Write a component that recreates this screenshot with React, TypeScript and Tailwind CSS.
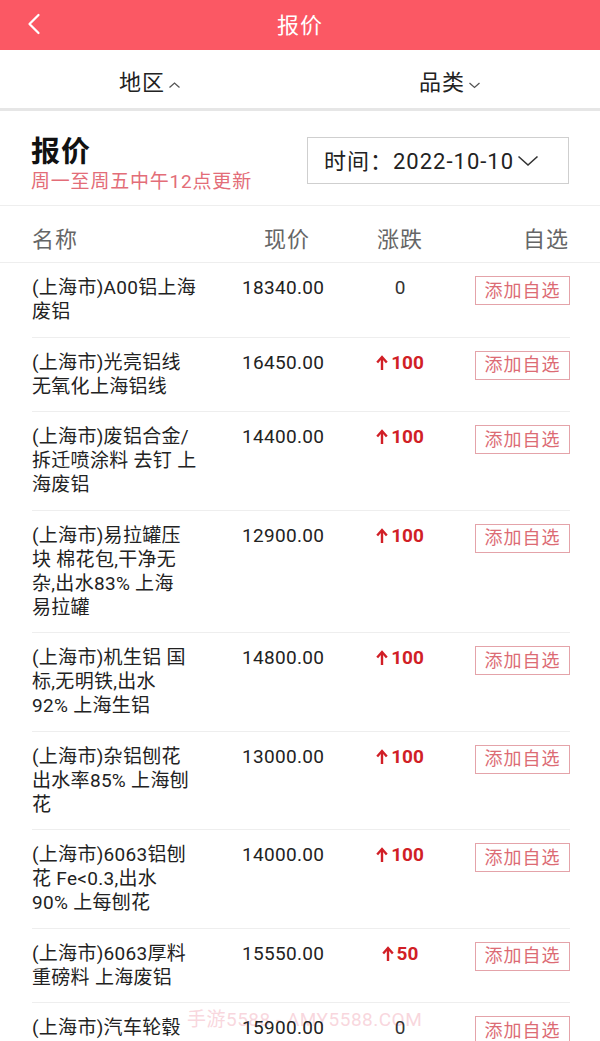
import { ChevronLeft } from 'lucide-react'

// names are kept in the same line breaks as the app shows them
const rows = [
  { name: ['(上海市)A00铝上海', '废铝'], price: '18340.00', change: 0 },
  { name: ['(上海市)光亮铝线', '无氧化上海铝线'], price: '16450.00', change: 100 },
  { name: ['(上海市)废铝合金/', '拆迁喷涂料 去钉 上', '海废铝'], price: '14400.00', change: 100 },
  { name: ['(上海市)易拉罐压', '块 棉花包,干净无', '杂,出水83% 上海', '易拉罐'], price: '12900.00', change: 100 },
  { name: ['(上海市)机生铝 国', '标,无明铁,出水', '92% 上海生铝'], price: '14800.00', change: 100 },
  { name: ['(上海市)杂铝刨花', '出水率85% 上海刨', '花'], price: '13000.00', change: 100 },
  { name: ['(上海市)6063铝刨', '花 Fe<0.3,出水', '90% 上每刨花'], price: '14000.00', change: 100 },
  { name: ['(上海市)6063厚料', '重磅料 上海废铝'], price: '15550.00', change: 50 },
  { name: ['(上海市)汽车轮毂'], price: '15900.00', change: 0 },
]

function UpArrow() {
  return (
    <svg width="12" height="16" viewBox="0 0 12 16" className="mr-[3px]">
      <path d="M6 15V3" stroke="currentColor" strokeWidth="2.4" fill="none" />
      <path d="M1.2 7.5L6 2L10.8 7.5" stroke="currentColor" strokeWidth="2.4" fill="none" />
    </svg>
  )
}

function Caret({ up }: { up?: boolean }) {
  return (
    <svg width="13" height="8" viewBox="0 0 13 8" className="ml-[3px] mt-[5px] text-[#555]">
      <path d={up ? 'M1.5 6.5L6.5 2L11.5 6.5' : 'M1.5 2L6.5 6.5L11.5 2'} stroke="currentColor" strokeWidth="1.3" fill="none" />
    </svg>
  )
}

export default function App() {
  return (
    <div className="relative w-[600px] h-[1041px] overflow-hidden bg-white font-['Roboto','Noto_Sans_CJK_SC',sans-serif] text-[#222]">
      {/* top bar */}
      <div className="relative flex h-[50px] items-center justify-center bg-[#fb5864]">
        <ChevronLeft className="absolute left-[16px] top-[6px] text-white" size={36} strokeWidth={1.5} />
        <span className="text-[22px] tracking-[1px] text-white">报价</span>
      </div>

      {/* filters */}
      <div className="grid h-[61px] grid-cols-2 border-b-[3px] border-[#e6e6e6]">
        <div className="flex items-center justify-center pt-[6px] text-[22px] tracking-[1px]">
          地区<Caret up />
        </div>
        <div className="flex items-center justify-center pt-[6px] text-[22px] tracking-[1px]">
          品类<Caret />
        </div>
      </div>

      {/* title */}
      <div className="flex h-[95px] items-start justify-between border-b border-[#eeeeee] pl-[31px] pr-[31px]">
        <div className="pt-[23px]">
          <div className="text-[29px] font-bold leading-[36px] tracking-[1px] text-[#111]">报价</div>
          <div className="text-[19px] leading-[24px] tracking-[0.8px] text-[#e36d78]">周一至周五中午12点更新</div>
        </div>
        <div className="mt-[26px] flex h-[47px] w-[262px] items-center border border-[#cfcfcf] pl-[16px]">
          <span className="pt-[2px] text-[22px] tracking-[1px] text-[#222]">时间：2022-10-10</span>
          <svg width="22" height="12" viewBox="0 0 22 12" className="ml-[3px]">
            <path d="M1.5 1.5L11 10L20.5 1.5" stroke="#333" strokeWidth="1.6" fill="none" />
          </svg>
        </div>
      </div>

      {/* table head */}
      <div className="flex h-[57px] items-center border-b border-[#eeeeee] pt-[10px] pl-[32px] pr-[31px] text-[22px] tracking-[1px] text-[#666]">
        <div className="w-[210px]">名称</div>
        <div className="w-[100px] pl-[22px]">现价</div>
        <div className="w-[116px] text-center">涨跌</div>
        <div className="ml-auto">自选</div>
      </div>

      {/* watermark, sits under the rows */}
      <div className="pointer-events-none absolute left-[187px] top-[1006px] text-[19px] tracking-[0.5px] text-[#f7cdd5]/80">
        手游5588 - AMY5588.COM
      </div>

      {/* rows */}
      <div className="relative ml-[32px] mr-[30px]">
        {rows.map((r, i) => (
          <div key={i} className="flex items-start border-b border-[#eeeeee] pt-[13px] pb-[12.5px] text-[19px] leading-[24px]">
            <div className="w-[178px] whitespace-nowrap tracking-[0.3px] text-[#222]">
              {r.name.map((line, j) => (
                <div key={j}>{line}</div>
              ))}
            </div>
            <div className="ml-[32px] w-[100px] tracking-[0.3px] text-[#222]">{r.price}</div>
            <div className="w-[116px] text-center">
              {r.change > 0 ? (
                <span className="inline-flex items-center font-bold text-[#d11f26]">
                  <UpArrow />
                  {r.change}
                </span>
              ) : (
                <span className="text-[#333]">0</span>
              )}
            </div>
            <button className="ml-auto flex h-[29px] w-[95px] items-center justify-center border border-[#e4a3a9] text-[18px] tracking-[1px] text-[#dc6b74]">
              添加自选
            </button>
          </div>
        ))}
      </div>
    </div>
  )
}
